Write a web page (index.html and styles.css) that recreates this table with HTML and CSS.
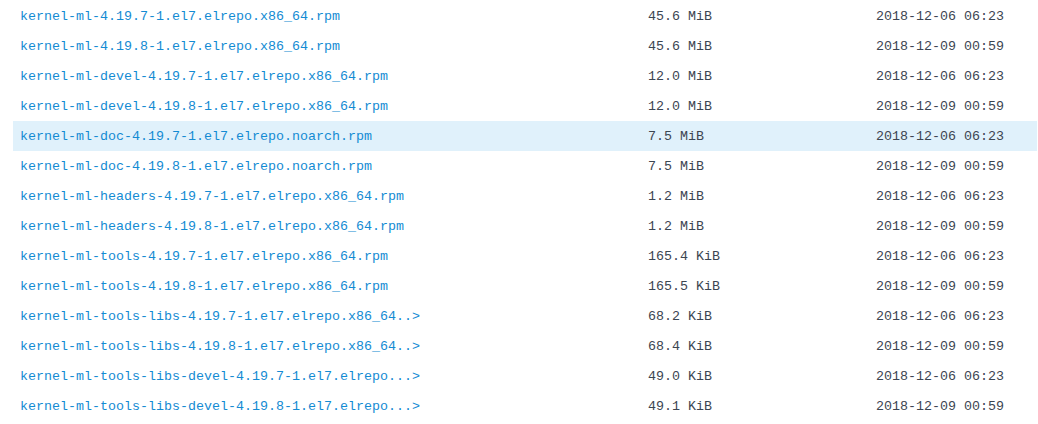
FILE: index.html
```html
<!DOCTYPE html>
<html>
<head>
<meta charset="utf-8">
<link rel="stylesheet" href="styles.css">
</head>
<body>
<div class="list">
  <div class="row"><a class="name">kernel-ml-4.19.7-1.el7.elrepo.x86_64.rpm</a><span class="size">45.6 MiB</span><span class="date">2018-12-06 06:23</span></div>
  <div class="row"><a class="name">kernel-ml-4.19.8-1.el7.elrepo.x86_64.rpm</a><span class="size">45.6 MiB</span><span class="date">2018-12-09 00:59</span></div>
  <div class="row"><a class="name">kernel-ml-devel-4.19.7-1.el7.elrepo.x86_64.rpm</a><span class="size">12.0 MiB</span><span class="date">2018-12-06 06:23</span></div>
  <div class="row"><a class="name">kernel-ml-devel-4.19.8-1.el7.elrepo.x86_64.rpm</a><span class="size">12.0 MiB</span><span class="date">2018-12-09 00:59</span></div>
  <div class="row active"><a class="name">kernel-ml-doc-4.19.7-1.el7.elrepo.noarch.rpm</a><span class="size">7.5 MiB</span><span class="date">2018-12-06 06:23</span></div>
  <div class="row"><a class="name">kernel-ml-doc-4.19.8-1.el7.elrepo.noarch.rpm</a><span class="size">7.5 MiB</span><span class="date">2018-12-09 00:59</span></div>
  <div class="row"><a class="name">kernel-ml-headers-4.19.7-1.el7.elrepo.x86_64.rpm</a><span class="size">1.2 MiB</span><span class="date">2018-12-06 06:23</span></div>
  <div class="row"><a class="name">kernel-ml-headers-4.19.8-1.el7.elrepo.x86_64.rpm</a><span class="size">1.2 MiB</span><span class="date">2018-12-09 00:59</span></div>
  <div class="row"><a class="name">kernel-ml-tools-4.19.7-1.el7.elrepo.x86_64.rpm</a><span class="size">165.4 KiB</span><span class="date">2018-12-06 06:23</span></div>
  <div class="row"><a class="name">kernel-ml-tools-4.19.8-1.el7.elrepo.x86_64.rpm</a><span class="size">165.5 KiB</span><span class="date">2018-12-09 00:59</span></div>
  <div class="row"><a class="name">kernel-ml-tools-libs-4.19.7-1.el7.elrepo.x86_64..&gt;</a><span class="size">68.2 KiB</span><span class="date">2018-12-06 06:23</span></div>
  <div class="row"><a class="name">kernel-ml-tools-libs-4.19.8-1.el7.elrepo.x86_64..&gt;</a><span class="size">68.4 KiB</span><span class="date">2018-12-09 00:59</span></div>
  <div class="row"><a class="name">kernel-ml-tools-libs-devel-4.19.7-1.el7.elrepo...&gt;</a><span class="size">49.0 KiB</span><span class="date">2018-12-06 06:23</span></div>
  <div class="row"><a class="name">kernel-ml-tools-libs-devel-4.19.8-1.el7.elrepo...&gt;</a><span class="size">49.1 KiB</span><span class="date">2018-12-09 00:59</span></div>
</div>
</body>
</html>
```
FILE: styles.css
```css
html, body {
  margin: 0;
  padding: 0;
  background: #ffffff;
}
body {
  font-family: "Liberation Mono", "DejaVu Sans Mono", monospace;
  font-size: 13.333px;
}
.list {
  display: flex;
  flex-direction: column;
  padding: 1px 1px 0 13px;
}
.row {
  display: grid;
  grid-template-columns: 628px 228px 1fr;
  height: 30px;
  align-items: center;
  padding-left: 7px;
  padding-top: 1px;
  box-sizing: border-box;
  white-space: pre;
}
.row.active {
  background: #e0f1fb;
}
.name {
  color: #138bd3;
  text-decoration: none;
}
.size, .date {
  color: #3b4551;
}
```
